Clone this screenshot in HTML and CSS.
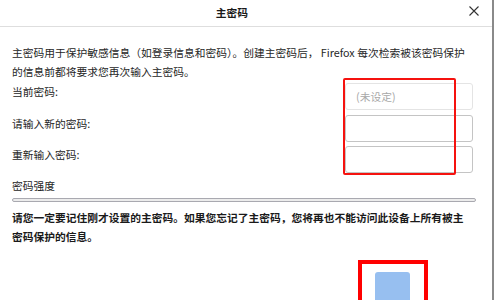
FILE: index.html
```html
<!DOCTYPE html>
<html lang="zh-CN">
<head>
    <meta charset="UTF-8">
    <meta name="viewport" content="width=device-width, initial-scale=1.0">
    <title>主密码</title>
    <link rel="stylesheet" href="styles.css">
</head>
<body>
    <div class="dialog">
        <div class="dialog-header">
            <div class="dialog-title">主密码</div>
            <div class="close-button">
                <svg width="10" height="10" viewBox="0 0 10 10">
                    <path d="M0.5 0.5 L9.5 9.5 M9.5 0.5 L0.5 9.5" stroke="#333" stroke-width="1.1" fill="none"/>
                </svg>
            </div>
        </div>
        <div class="dialog-body">
            <p class="intro">主密码用于保护敏感信息（如登录信息和密码）。创建主密码后， Firefox 每次检索被该密码保护的信息前都将要求您再次输入主密码。</p>
            <div class="form-rows">
                <div class="form-row">
                    <label class="row-label">当前密码:</label>
                    <input class="password-input" type="password" placeholder="(未设定)" disabled>
                </div>
                <div class="form-row">
                    <label class="row-label">请输入新的密码:</label>
                    <input class="password-input" type="password">
                </div>
                <div class="form-row">
                    <label class="row-label">重新输入密码:</label>
                    <input class="password-input" type="password">
                </div>
            </div>
            <div class="strength-label">密码强度</div>
            <div class="strength-bar"></div>
            <p class="warning">请您一定要记住刚才设置的主密码。如果您忘记了主密码，您将再也不能访问此设备上所有被主密码保护的信息。</p>
            <div class="dialog-footer">
                <button class="ok-button"></button>
            </div>
        </div>

        <!-- red annotation boxes from the screenshot -->
        <div class="mark mark-inputs"></div>
        <div class="mark mark-button"></div>
    </div>
</body>
</html>
```

FILE: styles.css
```css
body {
    margin: 0;
    font-family: "Noto Sans CJK SC", "Noto Sans", sans-serif;
    font-size: 10.75px;
    color: #262626;
    background: #fff;
    overflow: hidden;
}

.dialog {
    position: relative;
    width: 492px;
    height: 300px;
    border-right: 2px solid #8a8a8a;
    overflow: hidden;
}

.dialog-header {
    display: flex;
    align-items: center;
    height: 26px;
    border-bottom: 1px solid #dedede;
}

.dialog-title {
    flex: 1;
    text-align: center;
    font-weight: bold;
    color: #1a1a1a;
    padding-bottom: 2px;
}

.close-button {
    width: 20px;
    margin-right: 8px;
    display: flex;
    justify-content: center;
    padding-bottom: 4px;
}

.dialog-body {
    padding: 0 16px 0 12px;
}

.intro {
    margin: 17px 10px 0 0;
    line-height: 18.5px;
}

.form-rows {
    display: flex;
    flex-direction: column;
    gap: 4.5px;
    margin-top: 2px;
}

.form-row {
    display: flex;
    justify-content: space-between;
    align-items: flex-start;
}

.row-label {
    line-height: 18px;
}

.password-input {
    width: 128px;
    height: 27px;
    box-sizing: border-box;
    margin-right: 3px;
    border: 1px solid #c4c4c4;
    border-radius: 3px;
    background: #fff;
    font-family: inherit;
    font-size: 10.75px;
    padding: 0 10px;
}

.password-input:disabled {
    border-color: #e4e4e4;
}

.password-input::placeholder {
    color: #a8a8a8;
}

.strength-label {
    margin-top: 4px;
    line-height: 18px;
}

.strength-bar {
    margin-top: 3px;
    height: 4px;
    box-sizing: border-box;
    border: 1px solid #a9a9b0;
    border-radius: 3px;
    background: #ececec;
}

.warning {
    margin: 5.5px 10px 0 0;
    font-weight: bold;
    line-height: 19px;
    color: #1a1a1a;
}

.dialog-footer {
    margin-top: 26.5px;
    padding-left: 363px;
}

.ok-button {
    display: block;
    width: 35px;
    height: 40px;
    border: none;
    border-radius: 3px;
    background: #97bff0;
}

.mark {
    position: absolute;
    box-sizing: border-box;
    border: 2px solid #f5120f;
}

.mark-inputs {
    left: 343px;
    top: 78px;
    width: 113px;
    height: 97px;
    border-radius: 2px;
}

.mark-button {
    left: 358px;
    top: 260px;
    width: 70px;
    height: 50px;
    border-width: 4px;
    border-color: #ff0000;
}
```
